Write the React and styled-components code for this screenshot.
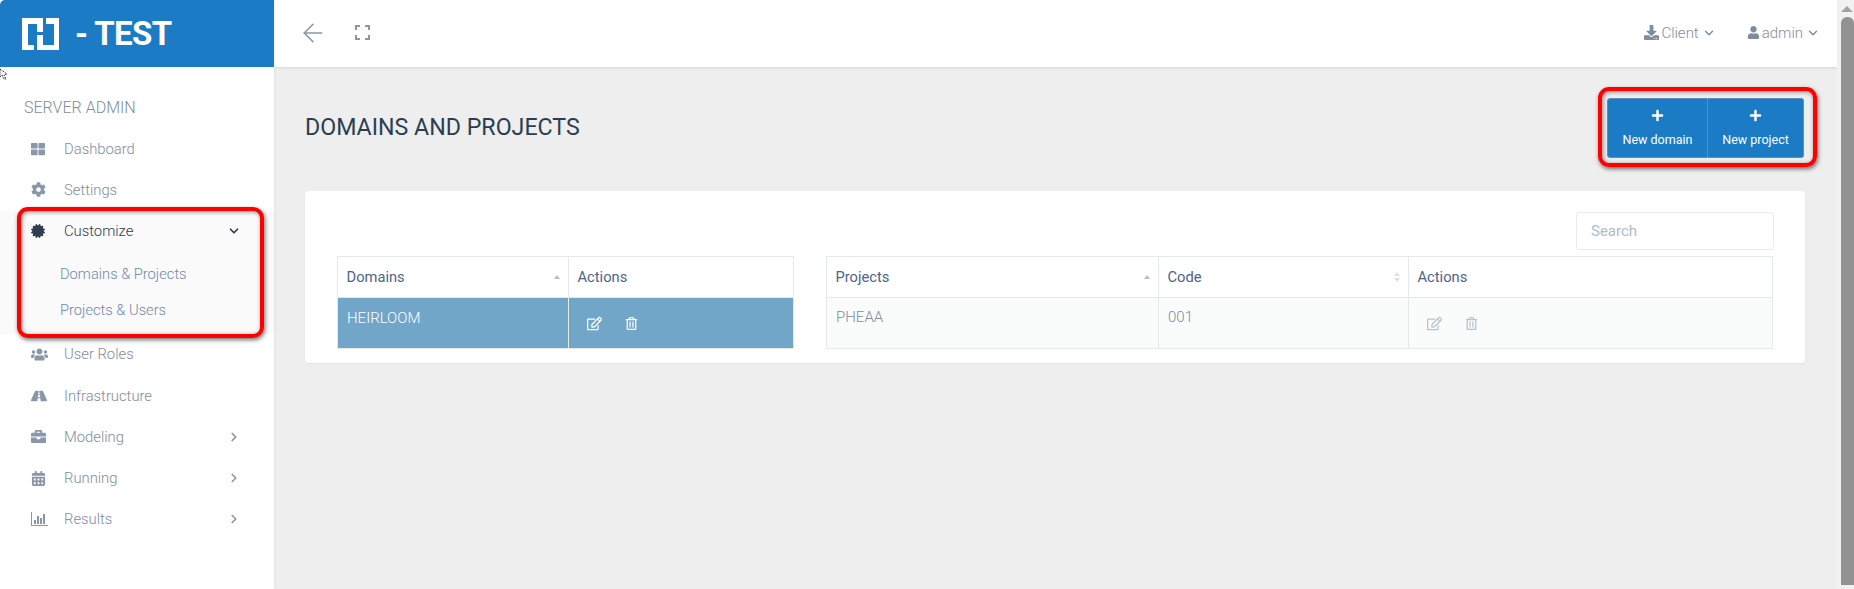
import React from "react"
import styled, { createGlobalStyle } from "styled-components"
import {
  FaThLarge, FaCog, FaCertificate, FaUsers, FaRoad, FaBriefcase, FaCalendarAlt, FaRegEdit, FaRegTrashAlt,
  FaDownload, FaUser, FaPlus,
} from "react-icons/fa"
import { ArrowLeft, ChevronDown, ChevronRight } from "lucide-react"

const Global = createGlobalStyle`
  html, body { margin: 0; padding: 0; height: 100%; overflow: hidden; background: #eee; }
  body { font-family: Roboto, "Liberation Sans", sans-serif; }
  * { box-sizing: border-box; }
`

function Logo() {
  return (
    <svg width="37" height="32" viewBox="0 0 37 32" fill="#fff">
      <path d="M0 0H21V14H15V6H6V27H12V32H0Z" />
      <path d="M24 0H37V32H15V17H21V27H32V6H24Z" />
    </svg>
  )
}

function Corners() {
  return (
    <svg width="15" height="15" viewBox="0 0 15 15" fill="none" stroke="#8a97a8" strokeWidth="2">
      <path d="M1 5V1h4M10 1h4v4M14 10v4h-4M5 14H1v-4" />
    </svg>
  )
}

function Bars() {
  return (
    <svg width="17" height="14" viewBox="0 0 17 14" fill="#8a97a8">
      <path d="M0 0h1v13h16v1H0zM3 8h2v4H3zM6 4h2v8H6zM9 6h2v6H9zM12 2h2v10h-2z" />
    </svg>
  )
}

export default function App() {
  return (
    <Page>
      <Global />
      <Sidebar>
        <Brand>
          <Logo />
          <BrandName>- TEST</BrandName>
        </Brand>
        <CursorMark>
          <svg width="9" height="12" viewBox="0 0 9 12" fill="#fff" stroke="#000" strokeWidth="1" strokeDasharray="1 1">
            <path d="M0 1l7 5-3 1 2 4-2 0-2-4-2 2z" />
          </svg>
        </CursorMark>
        <SectionLabel>SERVER ADMIN</SectionLabel>
        <NavItem><NavIcon><FaThLarge size={14} /></NavIcon>Dashboard</NavItem>
        <NavItem><NavIcon><FaCog size={15} /></NavIcon>Settings</NavItem>
        <NavGroup>
          <NavItem $active>
            <NavIcon $active><FaCertificate size={14} /></NavIcon>
            Customize
            <Arrow $active><ChevronDown size={14} strokeWidth={3} /></Arrow>
          </NavItem>
          <SubItem>Domains &amp; Projects</SubItem>
          <SubItem>Projects &amp; Users</SubItem>
          <Highlight $inset="-4px 10px -4px 17px" />
        </NavGroup>
        <NavItem><NavIcon><FaUsers size={17} /></NavIcon>User Roles</NavItem>
        <NavItem><NavIcon><FaRoad size={16} /></NavIcon>Infrastructure</NavItem>
        <NavItem><NavIcon><FaBriefcase size={15} /></NavIcon>Modeling<Arrow><ChevronRight size={14} strokeWidth={3} /></Arrow></NavItem>
        <NavItem><NavIcon><FaCalendarAlt size={15} /></NavIcon>Running<Arrow><ChevronRight size={14} strokeWidth={3} /></Arrow></NavItem>
        <NavItem><NavIcon><Bars /></NavIcon>Results<Arrow><ChevronRight size={14} strokeWidth={3} /></Arrow></NavItem>
      </Sidebar>

      <Main>
        <TopBar>
          <ArrowLeft size={30} color="#8a97a8" strokeWidth={1.3} />
          <Corners />
          <TopLinks>
            <TopLink><FaDownload size={15} />Client<ChevronDown size={14} strokeWidth={2.5} /></TopLink>
            <TopLink><FaUser size={13} />admin<ChevronDown size={14} strokeWidth={2.5} /></TopLink>
          </TopLinks>
        </TopBar>
        <Content>
          <TitleRow>
            <Title>DOMAINS AND PROJECTS</Title>
            <ButtonGroup>
              <ActionButton $width={101}><FaPlus size={13} />New domain</ActionButton>
              <ActionButton $width={96}><FaPlus size={13} />New project</ActionButton>
              <Highlight $inset="-11px -13px -9px -9px" />
            </ButtonGroup>
          </TitleRow>
          <Card>
            <SearchRow><SearchBox placeholder="Search" /></SearchRow>
            <Tables>
              <DomainTable>
                <thead>
                  <tr>
                    <Th><HeadCell>Domains<Sort><Triangle $color="#b3bdc7" /></Sort></HeadCell></Th>
                    <Th>Actions</Th>
                  </tr>
                </thead>
                <tbody>
                  <Row $selected>
                    <Td $selected>HEIRLOOM</Td>
                    <Td $selected><RowActions $selected><FaRegEdit size={15} /><FaRegTrashAlt size={13} /></RowActions></Td>
                  </Row>
                </tbody>
              </DomainTable>
              <ProjectTable>
                <thead>
                  <tr>
                    <Th><HeadCell>Projects<Sort><Triangle $color="#b3bdc7" /></Sort></HeadCell></Th>
                    <Th><HeadCell>Code<Sort><Triangle $color="#dde1e5" /><Triangle $color="#dde1e5" $down /></Sort></HeadCell></Th>
                    <Th>Actions</Th>
                  </tr>
                </thead>
                <tbody>
                  <Row>
                    <Td>PHEAA</Td>
                    <Td>001</Td>
                    <Td><RowActions><FaRegEdit size={15} /><FaRegTrashAlt size={13} /></RowActions></Td>
                  </Row>
                </tbody>
              </ProjectTable>
            </Tables>
          </Card>
        </Content>
      </Main>

      <Scrollbar>
        <ScrollArrow />
        <ScrollThumb />
      </Scrollbar>
    </Page>
  )
}

const Page = styled.div`
  display: flex;
  width: 1854px;
  height: 589px;
  overflow: hidden;
`

const Sidebar = styled.aside`
  position: relative;
  z-index: 2;
  flex: 0 0 274px;
  background: #fff;
  box-shadow: 1px 0 3px rgba(0, 0, 0, 0.05);
`

const Brand = styled.div`
  display: flex;
  align-items: center;
  gap: 16px;
  height: 67px;
  padding-left: 22px;
  background: #1b7bc4;
  border-top-left-radius: 5px;
`

const BrandName = styled.span`
  font-size: 33px;
  font-weight: 700;
  color: #fff;
  letter-spacing: -0.6px;
`

const CursorMark = styled.div`
  position: absolute;
  left: 0;
  top: 68px;
  line-height: 0;
`

const SectionLabel = styled.div`
  height: 49px;
  padding: 32px 0 0 24px;
  margin-bottom: 12px;
  font-size: 16px;
  font-weight: 300;
  line-height: 18px;
  color: #7f8da0;
`

const NavItem = styled.div`
  display: flex;
  align-items: center;
  height: 41.3px;
  padding: 0 33px 0 31px;
  font-size: 14.8px;
  font-weight: 300;
  color: ${p => (p.$active ? "#2e3e50" : "#7f8da0")};
`

const NavIcon = styled.span`
  display: flex;
  align-items: center;
  width: 33px;
  color: ${p => (p.$active ? "#2e3e50" : "#8a97a8")};
`

const Arrow = styled.span`
  display: flex;
  margin-left: auto;
  color: ${p => (p.$active ? "#2e3e50" : "#8a97a8")};
`

const NavGroup = styled.div`
  position: relative;
  height: 123px;
  background: #fafafa;
  & > ${NavItem} { height: 41px; margin-bottom: 4px; }
`

const SubItem = styled.div`
  height: 36px;
  padding-left: 60px;
  font-size: 14.7px;
  font-weight: 300;
  line-height: 36px;
  color: #7389ad;
`

const Highlight = styled.span`
  position: absolute;
  inset: ${p => p.$inset};
  border: 4px solid #f00;
  border-radius: 11px;
  box-shadow: 1px 2px 4px rgba(0, 0, 0, 0.55), inset 1px 1px 4px rgba(0, 0, 0, 0.45);
  pointer-events: none;
`

const Main = styled.main`
  flex: 1;
  min-width: 0;
  display: flex;
  flex-direction: column;
`

const TopBar = styled.header`
  display: flex;
  align-items: center;
  gap: 27px;
  height: 67px;
  padding: 0 17px 2px 24px;
  background: #fff;
  box-shadow: 0 1px 3px rgba(0, 0, 0, 0.1);
`

const TopLinks = styled.div`
  display: flex;
  align-items: center;
  gap: 31px;
  margin-left: auto;
`

const TopLink = styled.span`
  display: flex;
  align-items: center;
  gap: 2px;
  font-size: 15px;
  font-weight: 300;
  color: #7f8da0;
  svg:last-child { margin-left: 1px; }
`

const Content = styled.div`
  flex: 1;
  padding: 0 32px 0 31px;
`

const TitleRow = styled.div`
  display: flex;
  align-items: flex-start;
  justify-content: space-between;
  height: 124px;
  padding-top: 31px;
`

const Title = styled.h1`
  margin: 16px 0 0;
  font-size: 23.2px;
  font-weight: 400;
  line-height: 26px;
  color: #2b3e50;
`

const ButtonGroup = styled.div`
  position: relative;
  display: flex;
  height: 60px;
  margin-right: 1px;
`

const ActionButton = styled.button`
  display: flex;
  flex-direction: column;
  align-items: center;
  gap: 10px;
  width: ${p => p.$width}px;
  padding: 10px 0 0;
  background: #1b7bc4;
  border: 1px solid #5f8fb8;
  font-family: inherit;
  font-size: 12.5px;
  font-weight: 400;
  color: #fff;
  & + & { border-left: 0; }
  &:first-child { border-radius: 3px 0 0 3px; }
  &:nth-child(2) { border-radius: 0 3px 3px 0; }
`

const Card = styled.section`
  height: 172px;
  padding: 21px 32px 0;
  background: #fff;
  border-radius: 4px;
  box-shadow: 0 1px 2px rgba(0, 0, 0, 0.05);
`

const SearchRow = styled.div`
  display: flex;
  justify-content: flex-end;
  margin-right: -1px;
  margin-bottom: 6px;
`

const SearchBox = styled.input`
  width: 198px;
  height: 38px;
  padding: 0 14px;
  border: 1px solid #e6ecef;
  border-radius: 3px;
  outline: none;
  font-family: inherit;
  font-size: 15px;
  &::placeholder { color: #aebccb; }
`

const Tables = styled.div`
  display: flex;
  gap: 32px;
`

const DomainTable = styled.table`
  width: 457px;
  height: 93px;
  table-layout: fixed;
  border-collapse: collapse;
  th:first-child { width: 231px; }
`

const ProjectTable = styled(DomainTable)`
  width: 947px;
  th:first-child { width: 332px; }
  th:nth-child(2) { width: 250px; }
`

const Th = styled.th`
  height: 41px;
  padding: 0 8.5px;
  border: 1px solid #e3eaed;
  font-size: 14.7px;
  font-weight: 400;
  text-align: left;
  color: #4d6488;
`

const HeadCell = styled.div`
  display: flex;
  align-items: center;
  justify-content: space-between;
`

const Sort = styled.span`
  display: flex;
  flex-direction: column;
  gap: 2px;
`

const Triangle = styled.span`
  width: 0;
  height: 0;
  border-left: 3.5px solid transparent;
  border-right: 3.5px solid transparent;
  border-bottom: ${p => (p.$down ? "0" : `4px solid ${p.$color}`)};
  border-top: ${p => (p.$down ? `4px solid ${p.$color}` : "0")};
`

const Row = styled.tr`
  background: ${p => (p.$selected ? "#71a6c9" : "#fafcfc")};
`

const Td = styled.td`
  padding: ${p => (p.$selected ? "11px" : "10px")} 9px 0;
  vertical-align: top;
  border: 1px solid ${p => (p.$selected ? "#e4ecdf" : "#e3eaed")};
  font-size: 15px;
  font-weight: 300;
  color: ${p => (p.$selected ? "#fff" : "#7f8da0")};
`

const RowActions = styled.div`
  display: flex;
  align-items: center;
  gap: 23px;
  padding: ${p => (p.$selected ? "7px" : "8px")} 0 0 9px;
  color: ${p => (p.$selected ? "#fff" : "#b3c3d0")};
`

const Scrollbar = styled.div`
  flex: 0 0 17px;
  padding-left: 4px;
  background: #f1f1f1;
`

const ScrollArrow = styled.div`
  width: 0;
  height: 0;
  margin: 6px 0 5px 0;
  border-left: 6px solid transparent;
  border-right: 6px solid transparent;
  border-bottom: 6px solid #a3a3a3;
`

const ScrollThumb = styled.div`
  height: 568px;
  background: #929292;
  border-radius: 6px 6px 0 0;
`
